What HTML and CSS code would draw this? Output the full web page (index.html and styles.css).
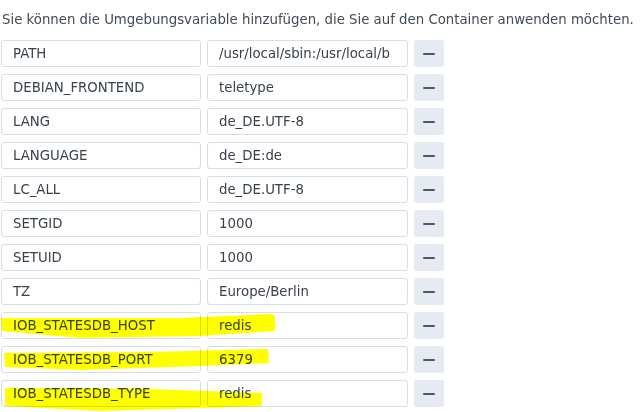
FILE: index.html
```html
<!DOCTYPE html>
<html lang="de">
<head>
<meta charset="utf-8">
<link rel="stylesheet" href="styles.css">
</head>
<body>
<div class="page">
  <p class="intro">Sie können die Umgebungsvariable hinzufügen, die Sie auf den Container anwenden möchten.</p>
  <div class="rows">
    <div class="row"><div class="field">PATH</div><div class="field">/usr/local/sbin:/usr/local/b</div><div class="btn"><span class="minus"></span></div></div>
    <div class="row"><div class="field">DEBIAN_FRONTEND</div><div class="field">teletype</div><div class="btn"><span class="minus"></span></div></div>
    <div class="row"><div class="field">LANG</div><div class="field">de_DE.UTF-8</div><div class="btn"><span class="minus"></span></div></div>
    <div class="row"><div class="field">LANGUAGE</div><div class="field">de_DE:de</div><div class="btn"><span class="minus"></span></div></div>
    <div class="row"><div class="field">LC_ALL</div><div class="field">de_DE.UTF-8</div><div class="btn"><span class="minus"></span></div></div>
    <div class="row"><div class="field">SETGID</div><div class="field">1000</div><div class="btn"><span class="minus"></span></div></div>
    <div class="row"><div class="field">SETUID</div><div class="field">1000</div><div class="btn"><span class="minus"></span></div></div>
    <div class="row"><div class="field">TZ</div><div class="field">Europe/Berlin</div><div class="btn"><span class="minus"></span></div></div>
    <div class="row"><div class="field">IOB_STATESDB_HOST</div><div class="field">redis</div><div class="btn"><span class="minus"></span></div></div>
    <div class="row"><div class="field">IOB_STATESDB_PORT</div><div class="field">6379</div><div class="btn"><span class="minus"></span></div></div>
    <div class="row"><div class="field">IOB_STATESDB_TYPE</div><div class="field">redis</div><div class="btn"><span class="minus"></span></div></div>
  </div>
  <svg class="marker" width="643" height="412" viewBox="0 0 643 412">
    <path d="M1 318 L180 318 L272 314 L275 316 L275 331 L200 336 L80 338 L2 331 Z"/>
    <path d="M4 353 L150 352 L268 349 L269 363 L200 366 L80 370 L5 367 Z"/>
    <path d="M5 388 L150 389 L262 393 L262 406 L100 411 L5 406 Z"/>
  </svg>
</div>
</body>
</html>
```

FILE: styles.css
```css
html, body {
  margin: 0;
  padding: 0;
  background: #ffffff;
}
.page {
  position: relative;
  width: 643px;
  height: 412px;
  overflow: hidden;
  padding-left: 1px;
  box-sizing: border-box;
  font-family: "DejaVu Sans", Verdana, sans-serif;
  font-size: 13.3px;
  color: #414b55;
}
.intro {
  margin: 0;
  padding-top: 11px;
  padding-left: 1px;
  line-height: 17px;
  height: 29px;
  white-space: nowrap;
}
.rows {
  display: flex;
  flex-direction: column;
  gap: 7px;
}
.row {
  display: grid;
  grid-template-columns: 200px 201px 30px;
  column-gap: 6px;
  height: 27px;
}
.field {
  box-sizing: border-box;
  height: 27px;
  border: 1px solid #d6dee8;
  border-radius: 3px;
  padding: 0 8px 0 11px;
  line-height: 26px;
  white-space: nowrap;
  overflow: hidden;
  color: #38424c;
}
.btn {
  box-sizing: border-box;
  height: 27px;
  background: #e6eaf2;
  border-radius: 3px;
  display: flex;
  align-items: center;
  justify-content: center;
}
.minus {
  display: block;
  width: 12px;
  height: 2px;
  background: #4e5862;
  border-radius: 1px;
}
.marker {
  position: absolute;
  left: 0;
  top: 0;
  pointer-events: none;
  mix-blend-mode: multiply;
}
.marker path {
  fill: #ffff00;
}
```
